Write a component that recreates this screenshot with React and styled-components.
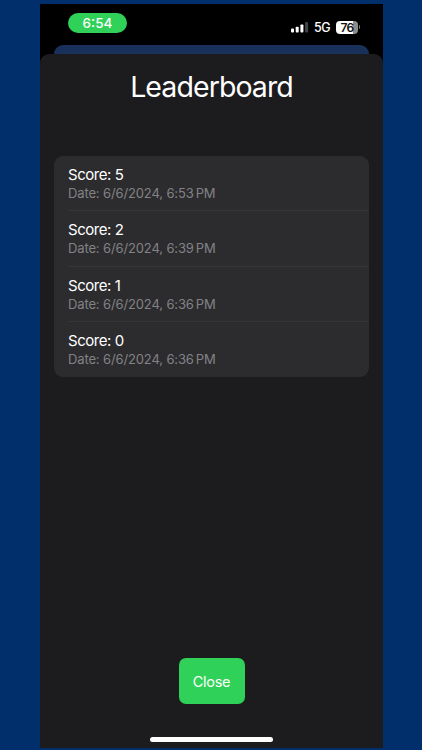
import React from "react"
import styled, { createGlobalStyle } from "styled-components"

const GlobalStyle = createGlobalStyle`
* {
    box-sizing: border-box;
}
body {
    margin: 0;
    background: #002f6c;
    font-family: Inter, "Liberation Sans", sans-serif;
}
`

const Page = styled.div`
height: 750px;
padding: 4px 39px 2px 40px;
background: #002f6c;
`

const Phone = styled.div`
height: 744px;
background: #000;
display: flex;
flex-direction: column;
overflow: hidden;
`

const StatusBar = styled.div`
height: 41px;
flex: none;
display: flex;
justify-content: space-between;
align-items: flex-start;
padding: 9px 23px 0 28px;
color: white;
`

const Time = styled.div`
width: 59px;
height: 20px;
border-radius: 10px;
background: #30d158;
font-size: 13.5px;
font-weight: 500;
line-height: 21px;
text-align: center;
`

const StatusIcons = styled.div`
display: flex;
align-items: center;
height: 14px;
margin-top: 7px;
`

const Network = styled.span`
font-size: 12.5px;
font-weight: 500;
line-height: 14px;
margin: 1px 6px 0 5px;
width: 16px;
white-space: nowrap;
letter-spacing: -0.4px;
`

const Battery = styled.div`
width: 22px;
height: 13px;
border-radius: 4px;
background: linear-gradient(to right, #fff 76%, #8c8c8c 76%);
color: #111;
font-size: 12px;
font-weight: 600;
line-height: 13px;
text-align: center;
letter-spacing: -0.6px;
`

const BatteryCap = styled.div`
width: 1px;
height: 4px;
margin-left: 1px;
border-radius: 0 1px 1px 0;
background: #777;
`

const BackCard = styled.div`
height: 9px;
flex: none;
margin: 0 14px;
border-radius: 9px 9px 0 0;
background: #18305a;
`

const Sheet = styled.div`
flex: 1;
display: flex;
flex-direction: column;
align-items: center;
border-radius: 9px 9px 0 0;
background: #1c1c1e;
color: white;
`

const Title = styled.h1`
margin: 15px 0 0;
font-size: 28.5px;
font-weight: 400;
line-height: 36px;
letter-spacing: -0.92px;
`

const List = styled.ul`
align-self: stretch;
margin: 51px 14px 0;
padding: 0 0 0 14px;
height: 221px;
list-style: none;
border-radius: 9px;
background: #2c2c2e;
`

const Row = styled.li`
height: 55.25px;
padding-top: 9px;
border-bottom: 1px solid #363638;

&:last-child {
    border-bottom: none;
}
`

const Score = styled.div`
font-size: 15px;
line-height: 19px;
letter-spacing: -0.45px;
`

const DateText = styled.div`
color: #828286;
font-size: 13px;
line-height: 19px;
letter-spacing: -0.13px;
`

const Meridiem = styled.span`
margin-left: 2px;
`

const CloseButton = styled.button`
width: 66px;
height: 46px;
margin-top: auto;
padding: 0;
border: none;
border-radius: 7px;
background: #30d158;
color: white;
font-family: inherit;
font-size: 14.5px;
line-height: 47px;
letter-spacing: -0.25px;
`

const HomeIndicator = styled.div`
width: 123px;
height: 5px;
margin: 33px 0 6px;
border-radius: 3px;
background: white;
`

const scores = [
    { score: 5, date: "6/6/2024, 6:53" },
    { score: 2, date: "6/6/2024, 6:39" },
    { score: 1, date: "6/6/2024, 6:36" },
    { score: 0, date: "6/6/2024, 6:36" },
]

function Signal() {
    return (
        <svg width="18" height="11" viewBox="0 0 18 11">
            <rect x="0" y="6.5" width="3" height="4" rx="0.9" fill="#fff" />
            <rect x="4.7" y="4.7" width="3" height="5.8" rx="0.9" fill="#fff" />
            <rect x="9.4" y="2.4" width="3" height="8.1" rx="0.9" fill="#fff" />
            <rect x="14.1" y="0" width="3" height="10.5" rx="0.9" fill="#444" />
        </svg>
    )
}

export default function App() {
    return (
        <Page>
            <GlobalStyle />
            <Phone>
                <StatusBar>
                    <Time>6:54</Time>
                    <StatusIcons>
                        <Signal />
                        <Network>5G</Network>
                        <Battery>76</Battery>
                        <BatteryCap />
                    </StatusIcons>
                </StatusBar>
                <BackCard />
                <Sheet>
                    <Title>Leaderboard</Title>
                    <List>
                        {scores.map((item) => (
                            <Row key={item.score}>
                                <Score>Score: {item.score}</Score>
                                <DateText>Date: {item.date}<Meridiem>PM</Meridiem></DateText>
                            </Row>
                        ))}
                    </List>
                    <CloseButton>Close</CloseButton>
                    <HomeIndicator />
                </Sheet>
            </Phone>
        </Page>
    )
}
